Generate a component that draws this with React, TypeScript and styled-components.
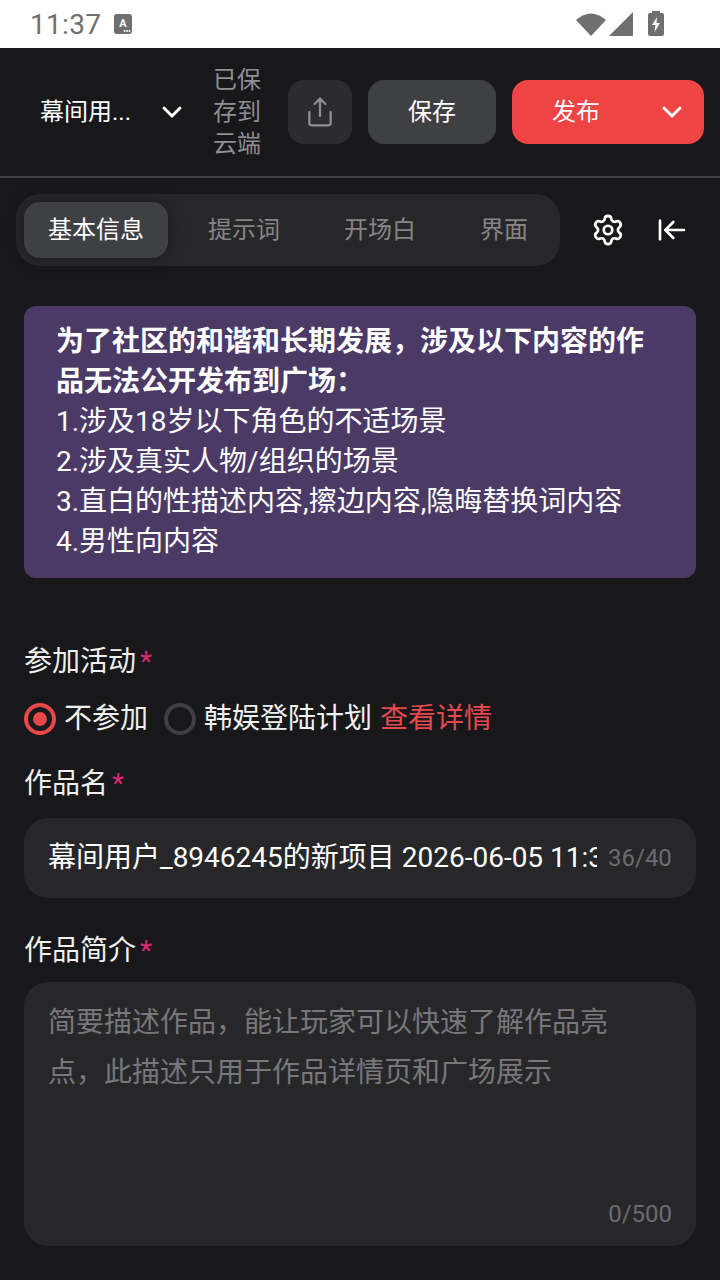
import React from 'react'
import styled, { createGlobalStyle } from 'styled-components'
import { ChevronDown, Settings, Share, ArrowLeftToLine } from 'lucide-react'

const GlobalStyle = createGlobalStyle`
  html, body { margin: 0; padding: 0; background: #18181b; }
  body { font-family: Roboto, "Noto Sans CJK SC", sans-serif; }
  * { box-sizing: border-box; }
`

const App: React.FC = () => {
  return (
    <Page>
      <GlobalStyle />
      <StatusBar>
        <StatusLeft>
          <Clock>11:37</Clock>
          <svg width="20" height="22" viewBox="0 0 20 22">
            <rect x="1" y="1" width="18" height="20" rx="3" fill="#6f6f6f" />
            <text x="10" y="14" fontSize="11" fontWeight="700" fill="#fff" textAnchor="middle" fontFamily="Roboto">A</text>
            <circle cx="11.5" cy="18" r="1" fill="#fff" />
            <circle cx="14" cy="18" r="1" fill="#fff" />
            <circle cx="16.5" cy="18" r="1" fill="#fff" />
          </svg>
        </StatusLeft>
        <StatusRight>
          <svg width="58" height="26" viewBox="0 0 58 26">
            <path d="M0 9 Q15 -4 30 9 L15 25 Z" fill="#6f6f6f" />
            <path d="M33 25 L57 1 V25 Z" fill="#6f6f6f" />
          </svg>
          <svg width="16" height="26" viewBox="0 0 16 26">
            <path d="M4 2 V0 H12 V2 H14 Q16 2 16 4 V23 Q16 25 14 25 H2 Q0 25 0 23 V4 Q0 2 2 2 Z" fill="#6f6f6f" />
            <path d="M9 6 L4 14 H7.5 L6.5 21 L12 12 H8.5 Z" fill="#fff" />
          </svg>
        </StatusRight>
      </StatusBar>

      <TopBar>
        <ProjectSelect>
          <ProjectName>幕间用...</ProjectName>
          <ChevronDown size={32} strokeWidth={2.2} color="#fff" />
        </ProjectSelect>
        <SaveState>已保存到云端</SaveState>
        <ShareButton>
          <Share size={32} strokeWidth={1.7} color="#8e8e93" />
        </ShareButton>
        <SaveButton>保存</SaveButton>
        <PublishButton>
          <PublishLabel>发布</PublishLabel>
          <ChevronDown size={32} strokeWidth={2.2} color="#fff" />
        </PublishButton>
      </TopBar>

      <TabRow>
        <Tabs>
          <Tab $active>基本信息</Tab>
          <Tab>提示词</Tab>
          <Tab>开场白</Tab>
          <Tab>界面</Tab>
        </Tabs>
        <IconButton><Settings size={34} strokeWidth={1.9} color="#fff" /></IconButton>
        <IconButton><ArrowLeftToLine size={32} strokeWidth={2} color="#fff" /></IconButton>
      </TabRow>

      <Content>
        <Notice>
          <NoticeTitle>为了社区的和谐和长期发展，涉及以下内容的作品无法公开发布到广场：</NoticeTitle>
          <div>1.涉及18岁以下角色的不适场景</div>
          <div>2.涉及真实人物/组织的场景</div>
          <div>3.直白的性描述内容,擦边内容,隐晦替换词内容</div>
          <div>4.男性向内容</div>
        </Notice>

        <ActivityLabel>参加活动<Star>*</Star></ActivityLabel>
        <RadioRow>
          <Radio $checked />
          <RadioText>不参加</RadioText>
          <Radio />
          <RadioText $tight>韩娱登陆计划</RadioText>
          <DetailLink>查看详情</DetailLink>
        </RadioRow>

        <NameLabel>作品名<Star>*</Star></NameLabel>
        <NameField>
          <NameValue>幕间用户_8946245的新项目 2026-06-05 11:37</NameValue>
          <Counter>36/40</Counter>
        </NameField>

        <IntroLabel>作品简介<Star>*</Star></IntroLabel>
        <IntroField>
          <Placeholder>简要描述作品，能让玩家可以快速了解作品亮点，此描述只用于作品详情页和广场展示</Placeholder>
          <IntroCounter>0/500</IntroCounter>
        </IntroField>
      </Content>
    </Page>
  )
}

const Page = styled.div`
  width: 720px;
  height: 1280px;
  overflow: hidden;
  background: #18181b;
  color: #fff;
`

const StatusBar = styled.div`
  height: 48px;
  background: #fff;
  display: flex;
  align-items: center;
  justify-content: space-between;
  padding: 0 56px 0 30px;
`

const StatusLeft = styled.div`
  display: flex;
  align-items: center;
  gap: 12px;
`

const Clock = styled.span`
  font-size: 28px;
  color: #6f6f6f;
  letter-spacing: 0.3px;
`

const StatusRight = styled.div`
  display: flex;
  align-items: center;
  gap: 14px;
`

const TopBar = styled.div`
  height: 130px;
  display: flex;
  align-items: center;
  padding: 0 16px 0 40px;
  border-bottom: 2px solid #3f3f42;
`

const ProjectSelect = styled.div`
  width: 148px;
  margin-right: -4px;
  display: flex;
  align-items: center;
  justify-content: space-between;
`

const ProjectName = styled.span`
  font-size: 24px;
  line-height: 32px;
  color: #fff;
`

const SaveState = styled.div`
  width: 48px;
  margin-left: 29px;
  font-size: 24px;
  line-height: 32px;
  color: #8e8e93;
`

const ShareButton = styled.div`
  width: 64px;
  height: 64px;
  margin-left: 27px;
  border-radius: 16px;
  background: #2c2c2f;
  display: flex;
  align-items: center;
  justify-content: center;
`

const SaveButton = styled.div`
  width: 128px;
  height: 64px;
  margin-left: 16px;
  border-radius: 16px;
  background: #3f4043;
  display: flex;
  align-items: center;
  justify-content: center;
  font-size: 24px;
  line-height: 32px;
`

const PublishButton = styled.div`
  width: 192px;
  height: 64px;
  margin-left: 16px;
  border-radius: 16px;
  background: #ef4444;
  display: flex;
  align-items: center;
  justify-content: space-between;
  padding: 0 16px 0 40px;
  font-size: 24px;
  line-height: 32px;
`

const PublishLabel = styled.span`
  color: #fff;
`

const TabRow = styled.div`
  display: flex;
  align-items: center;
  padding: 16px 0 0 16px;
`

const Tabs = styled.div`
  width: 544px;
  height: 72px;
  padding: 8px;
  border-radius: 24px;
  background: #27272a;
  display: flex;
  align-items: center;
  justify-content: space-between;
  margin-right: 16px;
`

const Tab = styled.div<{ $active?: boolean }>`
  height: 56px;
  padding: 0 24px;
  border-radius: 16px;
  display: flex;
  align-items: center;
  font-size: 24px;
  line-height: 32px;
  color: ${p => (p.$active ? '#fff' : '#858589')};
  background: ${p => (p.$active ? '#3f4043' : 'transparent')};
  box-shadow: ${p => (p.$active ? '0 0 16px rgba(24, 24, 27, 0.6)' : 'none')};
`

const IconButton = styled.div`
  width: 64px;
  height: 64px;
  display: flex;
  align-items: center;
  justify-content: center;
`

const Content = styled.div`
  padding: 40px 24px 0;
`

const Notice = styled.div`
  height: 272px;
  padding: 16px 32px;
  border-radius: 12px;
  background: #4b3a66;
  font-size: 28px;
  line-height: 40px;
  color: #fff;
`

const NoticeTitle = styled.div`
  font-weight: 700;
`

const FieldLabel = styled.div`
  font-size: 28px;
  line-height: 40px;
  color: #f0f0f0;
`

const ActivityLabel = styled(FieldLabel)`
  margin-top: 64px;
`

const NameLabel = styled(FieldLabel)`
  margin-top: 25px;
`

const IntroLabel = styled(FieldLabel)`
  margin-top: 33px;
`

const Star = styled.span`
  color: #db2777;
  margin-left: 4px;
`

const RadioRow = styled.div`
  display: flex;
  align-items: center;
  height: 40px;
  margin-top: 17px;
  font-size: 28px;
  line-height: 40px;
`

const Radio = styled.span<{ $checked?: boolean }>`
  width: 32px;
  height: 32px;
  flex: none;
  border-radius: 50%;
  border: 4px solid ${p => (p.$checked ? '#e8484a' : '#3f4043')};
  display: flex;
  align-items: center;
  justify-content: center;
  &::after {
    content: '';
    display: ${p => (p.$checked ? 'block' : 'none')};
    width: 14px;
    height: 14px;
    border-radius: 50%;
    background: #e8484a;
  }
`

const RadioText = styled.span<{ $tight?: boolean }>`
  margin: 0 ${p => (p.$tight ? '8px' : '16px')} 0 8px;
  color: #f0f0f0;
`

const DetailLink = styled.span`
  color: #e5484d;
`

const NameField = styled.div`
  height: 80px;
  margin-top: 14px;
  padding: 0 24px;
  border-radius: 24px;
  background: #27272a;
  display: flex;
  align-items: center;
`

const NameValue = styled.div`
  width: 549px;
  overflow: hidden;
  white-space: nowrap;
  font-size: 28px;
  line-height: 40px;
  color: #fff;
`

const Counter = styled.span`
  margin-left: 11px;
  font-size: 24px;
  color: #6b6b70;
`

const IntroField = styled.div`
  position: relative;
  height: 264px;
  margin-top: 11px;
  padding: 16px 24px;
  border-radius: 24px;
  background: #27272a;
`

const Placeholder = styled.div`
  width: 570px;
  font-size: 28px;
  line-height: 50px;
  color: #77777c;
`

const IntroCounter = styled.span`
  position: absolute;
  right: 24px;
  bottom: 18px;
  font-size: 24px;
  color: #6b6b70;
`

export default App
